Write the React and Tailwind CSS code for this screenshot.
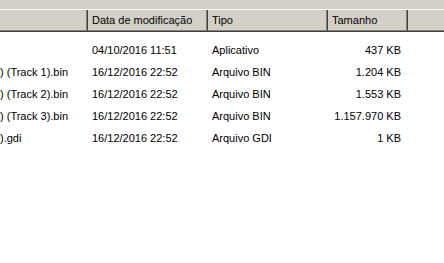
export default function App() {
  const rows = [
    { name: "", date: "04/10/2016 11:51", type: "Aplicativo", size: "437 KB" },
    { name: ") (Track 1).bin", date: "16/12/2016 22:52", type: "Arquivo BIN", size: "1.204 KB" },
    { name: ") (Track 2).bin", date: "16/12/2016 22:52", type: "Arquivo BIN", size: "1.553 KB" },
    { name: ") (Track 3).bin", date: "16/12/2016 22:52", type: "Arquivo BIN", size: "1.157.970 KB" },
    { name: ").gdi", date: "16/12/2016 22:52", type: "Arquivo GDI", size: "1 KB" },
  ];
  const cell =
    "h-[22px] bg-[#d4d0c8] border-r border-b border-[#404040] shadow-[inset_-1px_-1px_0_#808080] flex items-center pl-[4px] overflow-hidden whitespace-nowrap";
  return (
    <div
      className="w-[444px] h-[263px] bg-white overflow-hidden text-[11px] text-black"
      style={{ fontFamily: '"Liberation Sans", Arial, sans-serif' }}
    >
      <div className="h-[9px] bg-[#d4d0c8]" />
      <div className="flex border-t border-white">
        <div className={`${cell} w-[88px] shrink-0`} />
        <div className={`${cell} w-[120px] shrink-0`}>Data de modificação</div>
        <div className={`${cell} w-[120px] shrink-0`}>Tipo</div>
        <div className={`${cell} w-[80px] shrink-0`}>Tamanho</div>
        <div className={`${cell} flex-1 border-r-0 shadow-[inset_0_-1px_0_#808080]`} />
      </div>
      <div className="pt-[7px]">
        {rows.map((r, i) => (
          <div key={i} className="flex h-[22px] items-center whitespace-nowrap">
            <div className="w-[88px] shrink-0 overflow-hidden">{r.name}</div>
            <div className="w-[120px] shrink-0 pl-[4px]">{r.date}</div>
            <div className="w-[120px] shrink-0 pl-[4px]">{r.type}</div>
            <div className="w-[80px] shrink-0 pr-[7px] text-right">{r.size}</div>
          </div>
        ))}
      </div>
    </div>
  );
}
